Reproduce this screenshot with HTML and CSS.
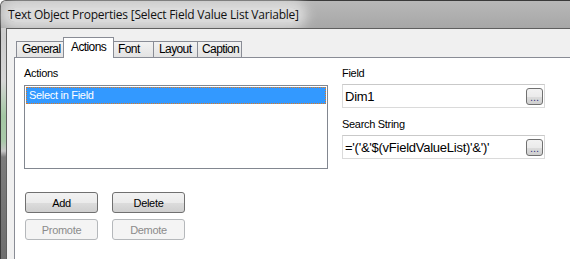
FILE: index.html
```html
<!DOCTYPE html>
<html lang="en">

<head>
     <meta charset="UTF-8">
     <title>Text Object Properties</title>
     <link rel="stylesheet" href="styles.css">
</head>

<body>

     <div class="window">
          <div class="titlebar">
               <span class="title">Text Object Properties [Select Field Value List Variable]</span>
          </div>
          <div class="client">
               <div class="tabs">
                    <div class="tab tab-general">General</div>
                    <div class="tab tab-actions active">Actions</div>
                    <div class="tab tab-font">Font</div>
                    <div class="tab tab-layout">Layout</div>
                    <div class="tab tab-caption">Caption</div>
               </div>
               <div class="panel">
                    <div class="columns">
                         <div class="left-col">
                              <div class="label">Actions</div>
                              <div class="listbox">
                                   <div class="list-item selected">Select in Field</div>
                              </div>
                              <div class="buttons">
                                   <button class="btn">Add</button>
                                   <button class="btn">Delete</button>
                                   <button class="btn" disabled>Promote</button>
                                   <button class="btn" disabled>Demote</button>
                              </div>
                         </div>
                         <div class="right-col">
                              <div class="label">Field</div>
                              <div class="textbox">
                                   <span class="value">Dim1</span>
                                   <button class="browse">...</button>
                              </div>
                              <div class="label">Search String</div>
                              <div class="textbox">
                                   <span class="value">='('&amp;'$(vFieldValueList)'&amp;')'</span>
                                   <button class="browse">...</button>
                              </div>
                         </div>
                    </div>
               </div>
          </div>
     </div>

</body>

</html>
```

FILE: styles.css
```css
* {
     padding: 0;
     margin: 0;
     box-sizing: border-box;
}

html,
body {
     width: 100%;
     height: 100%;
     overflow: hidden;
}

body {
     font-family: 'Liberation Sans', Arial, sans-serif;
     font-size: 11px;
     color: #000;
     background: #fff;
}

.window {
     width: 100%;
     height: 100%;
     display: flex;
     flex-direction: column;
     border-top: 1px solid #3a3a3a;
     border-left: 1px solid #3a3a3a;
     border-radius: 6px 0 0 0;
     background: linear-gradient(to bottom, #c4c4c4 0, #d6d6d6 80px, #a3c7a3 115px, #a9c9a9 140px, #c6c6c6 150px, #7c7c7c 156px, #6e6e6e 100%);
}

.titlebar {
     height: 27px;
     padding-left: 7px;
     display: flex;
     align-items: center;
     background: linear-gradient(to bottom, #b8b8b8, #a7a7a7);
     border-radius: 5px 0 0 0;
}

.title {
     font-family: 'Open Sans', 'Noto Sans', sans-serif;
     font-size: 12px;
     letter-spacing: -0.22px;
     color: #111;
     background: rgba(232, 232, 232, 0.75);
     box-shadow: 0 0 12px 8px rgba(232, 232, 232, 0.75);
     border-radius: 10px;
     line-height: 14px;
}

.client {
     flex: 1;
     margin-left: 5px;
     border-top: 1px solid #5f5f5f;
     border-left: 1px solid #5f5f5f;
     background: #f0f0f0;
     padding: 8px 0 0 7px;
     display: flex;
     flex-direction: column;
}

.tabs {
     display: flex;
     height: 20px;
     padding-left: 2px;
     position: relative;
     z-index: 1;
}

.tab {
     height: 16px;
     margin-top: 4px;
     padding-left: 5px;
     line-height: 15px;
     font-size: 12px;
     letter-spacing: -0.6px;
     white-space: nowrap;
     border: 1px solid #898c95;
     border-bottom: none;
     margin-right: -1px;
     background: linear-gradient(to bottom, #f2f2f2, #e3e3e3);
}

.tab.active {
     height: 21px;
     margin-top: 0;
     padding-top: 2px;
     padding-left: 7px;
     background: #fff;
     z-index: 2;
}

.tab-general {
     width: 48px;
}

.tab-actions {
     width: 51px;
}

.tab-font {
     width: 41px;
     padding-left: 4px;
}

.tab-layout {
     width: 45px;
}

.tab-caption {
     width: 45px;
     padding-left: 4px;
}

.panel {
     flex: 1;
     background: #fff;
     border-top: 1px solid #898c95;
     border-left: 1px solid #898c95;
     padding: 9px 0 0 9px;
}

.columns {
     display: flex;
     gap: 14px;
}

.label {
     height: 13px;
     line-height: 13px;
     letter-spacing: -0.3px;
}

.left-col {
     width: 304px;
}

.left-col .label {
     margin-bottom: 5px;
}

.listbox {
     height: 84px;
     border: 1px solid #828790;
     padding: 1px;
}

.list-item {
     height: 17px;
     line-height: 15px;
     padding-left: 2px;
     letter-spacing: -0.3px;
     border: 1px dotted #e07a20;
}

.list-item.selected {
     background: #3399ff;
     color: #fff;
}

.buttons {
     margin: 23px 0 0 1px;
     display: grid;
     grid-template-columns: 73px 73px;
     column-gap: 14px;
     row-gap: 6px;
}

.btn {
     height: 21px;
     font-family: 'Liberation Sans', Arial, sans-serif;
     font-size: 11px;
     letter-spacing: -0.3px;
     color: #000;
     border: 1px solid #707070;
     border-radius: 3px;
     background: linear-gradient(to bottom, #f2f2f2 0, #ebebeb 50%, #dddddd 50%, #cfcfcf 100%);
}

.btn:disabled {
     color: #8b8b8b;
     border-color: #b5b8bb;
     background: #f4f4f4;
}

.right-col {
     width: 203px;
}

.right-col .label {
     margin-bottom: 4px;
}

.textbox {
     height: 24px;
     display: flex;
     align-items: center;
     justify-content: space-between;
     padding: 0 1px 0 2px;
     border: 1px solid #dadada;
     border-top-color: #c9c9c9;
     margin-bottom: 10px;
}

.value {
     font-size: 13px;
     letter-spacing: -0.25px;
     color: #000;
}

.browse {
     width: 17px;
     height: 17px;
     border: 1px solid #707070;
     border-radius: 3px;
     background: linear-gradient(to bottom, #f2f2f2 0, #ebebeb 50%, #dddddd 50%, #cfcfcf 100%);
     font-family: 'Liberation Sans', Arial, sans-serif;
     font-size: 11px;
     line-height: 16px;
     color: #3a3a80;
}
```
